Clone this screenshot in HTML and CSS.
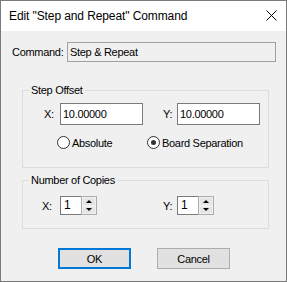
FILE: index.html
```html
<!DOCTYPE html>
<html lang="en">
<head>
  <meta charset="UTF-8" />
  <title>Edit "Step and Repeat" Command</title>
  <link rel="stylesheet" href="styles.css">
</head>
<body>
  <div class="window">
    <div class="titlebar">
      <span class="title">Edit "Step and Repeat" Command</span>
      <svg class="close" width="11" height="11" viewBox="0 0 11 11">
        <path d="M0.5 0.5 L10.5 10.5 M10.5 0.5 L0.5 10.5" stroke="#000" stroke-width="1" fill="none" />
      </svg>
    </div>

    <div class="content">
      <div class="cmd-row">
        <span class="cmd-label">Command:</span>
        <div class="cmd-box">Step &amp; Repeat</div>
      </div>

      <fieldset class="group offset">
        <legend>Step Offset</legend>
        <div class="pair-row">
          <label class="lbl lbl-x" for="offx">X:</label>
          <input class="num" id="offx" type="text" value="10.00000" />
          <label class="lbl lbl-y" for="offy">Y:</label>
          <input class="num" id="offy" type="text" value="10.00000" />
        </div>
        <div class="radio-row">
          <label class="radio first"><input type="radio" name="mode" /><span>Absolute</span></label>
          <label class="radio"><input type="radio" name="mode" checked /><span>Board Separation</span></label>
        </div>
      </fieldset>

      <fieldset class="group copies">
        <legend>Number of Copies</legend>
        <div class="spin-row">
          <span class="lbl lbl-cx">X:</span>
          <div class="spin">
            <div class="spin-field">1</div>
            <div class="spin-btns">
              <div class="spin-btn"><span class="arrow up"></span></div>
              <div class="spin-btn"><span class="arrow down"></span></div>
            </div>
          </div>
          <span class="lbl lbl-cy">Y:</span>
          <div class="spin">
            <div class="spin-field">1</div>
            <div class="spin-btns">
              <div class="spin-btn"><span class="arrow up"></span></div>
              <div class="spin-btn"><span class="arrow down"></span></div>
            </div>
          </div>
        </div>
      </fieldset>

      <div class="buttons">
        <button class="btn default">OK</button>
        <button class="btn">Cancel</button>
      </div>
    </div>
  </div>
</body>
</html>
```

FILE: styles.css
```css
body {
  margin: 0;
  font-family: "Liberation Sans", Arial, sans-serif;
  font-size: 11px;
  color: #000;
  background: #fff;
}
.window {
  width: 287px;
  height: 282px;
  box-sizing: border-box;
  border: 1px solid #7a7a7a;
  background: #f0f0f0;
  letter-spacing: -0.3px;
}
.titlebar {
  height: 30px;
  background: #fff;
  display: flex;
  align-items: center;
  justify-content: space-between;
  padding: 0 9px 0 8px;
}
.title {
  font-size: 12px;
  letter-spacing: -0.1px;
}
.close {
  margin-top: -1px;
}
.content {
  padding-top: 11px;
}
.cmd-row {
  display: flex;
  align-items: center;
  padding-left: 11px;
  height: 20px;
}
.cmd-label {
  width: 55px;
}
.cmd-box {
  width: 209px;
  height: 20px;
  box-sizing: border-box;
  border: 1px solid #a0a0a0;
  padding-left: 2px;
  line-height: 18px;
}
.group {
  margin: 0 17px 0 21px;
  border: 1px solid #dcdcdc;
  padding: 0;
  min-width: 0;
}
.group legend {
  margin-left: 6px;
  padding: 0 2px;
  line-height: 13px;
}
.offset {
  margin-top: 22px;
  padding-bottom: 18px;
}
.copies {
  margin-top: 6px;
  padding-bottom: 13px;
}
.pair-row {
  display: flex;
  align-items: center;
  padding-left: 21px;
  margin-top: 6px;
}
.lbl {
  display: block;
}
.lbl-x { width: 16px; }
.lbl-y { width: 14px; margin-left: 20px; }
.num {
  width: 83px;
  height: 22px;
  box-sizing: border-box;
  border: 1px solid #7a7a7a;
  background: #fff;
  padding: 0 0 0 2px;
  margin: 0;
  font: inherit;
  letter-spacing: -0.3px;
  outline: none;
}
.radio-row {
  display: flex;
  align-items: center;
  padding-left: 34px;
  margin-top: 11px;
  height: 13px;
}
.radio {
  display: flex;
  align-items: center;
}
.radio.first {
  width: 90px;
}
.radio input {
  appearance: none;
  -webkit-appearance: none;
  width: 13px;
  height: 13px;
  margin: 0 2px 0 0;
  border: 1px solid #333;
  border-radius: 50%;
  background: #fff;
  box-sizing: border-box;
  display: grid;
  place-items: center;
}
.radio input:checked::after {
  content: "";
  width: 5px;
  height: 5px;
  border-radius: 50%;
  background: #333;
}
.spin-row {
  display: flex;
  align-items: center;
  padding-left: 19px;
  margin-top: 9px;
}
.lbl-cx { width: 18px; }
.lbl-cy { width: 14px; margin-left: 66px; }
.spin {
  display: flex;
  height: 19px;
}
.spin-field {
  width: 21px;
  box-sizing: border-box;
  border: 1px solid #7a7a7a;
  border-right: none;
  background: #fff;
  padding-left: 3px;
  line-height: 17px;
  font-size: 12px;
}
.spin-btns {
  width: 16px;
  box-sizing: border-box;
  border: 1px solid #adadad;
  display: flex;
  flex-direction: column;
  background: #f0f0f0;
}
.spin-btn {
  flex: 1;
  display: flex;
  align-items: center;
  justify-content: center;
  background: #e5e5e5;
  border: 1px solid #f0f0f0;
}
.arrow {
  width: 0;
  height: 0;
  border-left: 3px solid transparent;
  border-right: 3px solid transparent;
}
.arrow.up { border-bottom: 3px solid #000; }
.arrow.down { border-top: 3px solid #000; }
.buttons {
  display: flex;
  gap: 26px;
  padding-left: 57px;
  margin-top: 19px;
}
.btn {
  width: 73px;
  height: 21px;
  box-sizing: border-box;
  background: #e1e1e1;
  border: 1px solid #adadad;
  font: inherit;
  letter-spacing: -0.3px;
  color: #000;
  padding: 0;
}
.btn.default {
  border: 2px solid #0078d7;
}
```
